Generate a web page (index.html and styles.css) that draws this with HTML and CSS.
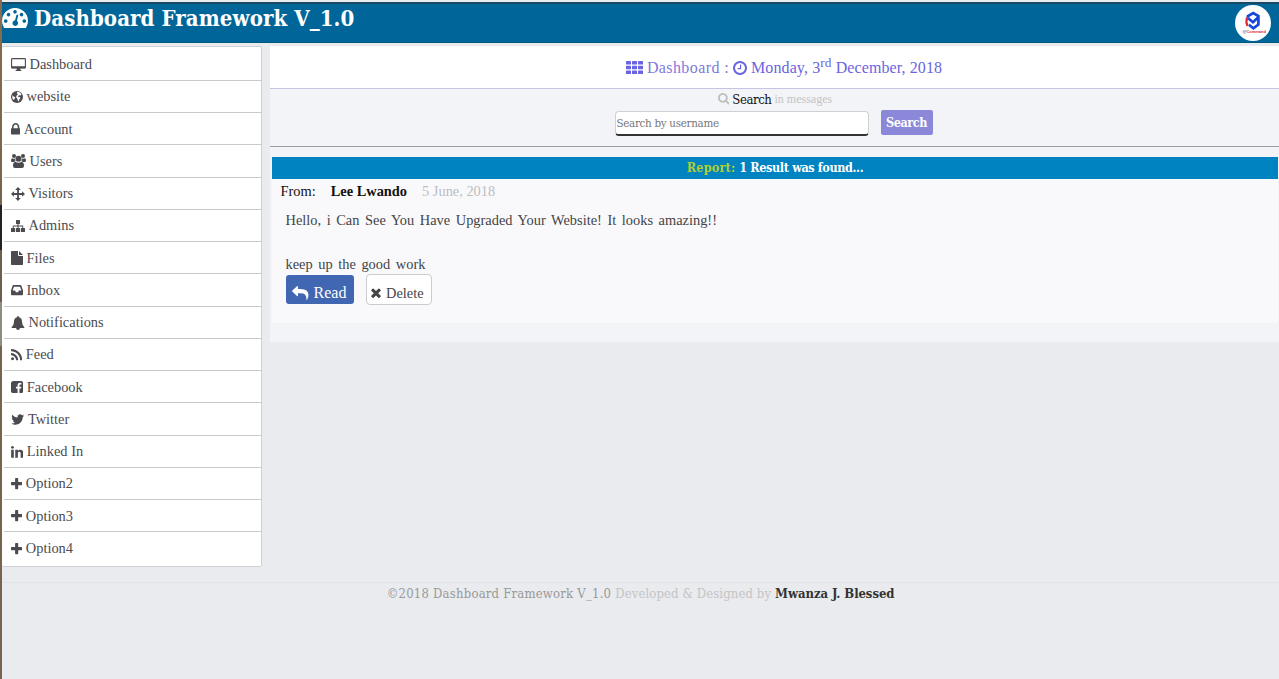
FILE: index.html
```html
<!DOCTYPE html>
<html lang="en">
<head>
<meta charset="utf-8">
<title>Dashboard Framework V_1.0</title>
<link rel="stylesheet" href="styles.css">
</head>
<body>
<header class="topbar">
  <h1 class="brand">
    <svg class="brand-icon" width="26" height="20" viewBox="0 0 26 20"><path fill="#fff" fill-rule="evenodd" d="M13 0A13 13 0 0 1 26 13Q26 16.600 24.100 19.400Q23.800 20 23 20H3Q2.200 20 1.900 19.400Q0 16.600 0 13A13 13 0 0 1 13 0ZM3.700 11.200a1.800 1.800 0 1 0 .01 0ZM6.500 4.800a1.800 1.800 0 1 0 .01 0ZM13 2a1.800 1.800 0 1 0 .01 0ZM19.500 4.800a1.800 1.800 0 1 0 .01 0ZM22.300 11.200a1.800 1.800 0 1 0 .01 0ZM14.500 7L13 12.300a2.800 2.800 0 1 0 1.900.5L16.300 7.400Q16 5.900 14.500 7Z"/></svg>
    <span>Dashboard Framework V_1.0</span>
  </h1>
  <span class="avatar">
    <svg width="36" height="36" viewBox="0 0 36 36"><path d="M12.200 12.500q-1.700 4 .3 8.500" fill="none" stroke="#e22832" stroke-width="2.200"/><path d="M13 12.800v-1.800l5.200-3 5.200 3v8.500l-5 3.800-4.500-3.500M13.300 13.200l4.700 4 5-4.700" fill="none" stroke="#1746dc" stroke-width="2.700"/><text class="avatar-label" x="7.500" y="27.500"><tspan fill="#1746dc">@</tspan>Command</text></svg>
  </span>
</header>

<div class="layout">
  <nav class="sidebar">
    <a class="item"><svg width="15" height="13" viewBox="0 0 15 13"><path fill="none" stroke="currentColor" stroke-width="1.100" d="M1.300.6h12.400q.7 0 .7.700v8q0 .7-.7.700H1.300q-.7 0-.7-.7v-8q0-.7.7-.7z"/><path fill="currentColor" d="M.6 8.300h13.800v1.900H.6zM6 10h3l.5 2 1 .4V13h-6v-.6l1-.4z"/></svg>Dashboard</a>
    <a class="item"><svg width="12" height="12" viewBox="0 0 12 12"><circle cx="6" cy="6" r="6" fill="currentColor"/><path fill="#fff" d="M6.200.8L8.900 1.500 10.500 3.300 9.500 4.500 8.300 4.200 7 5.100 7.600 6.200 9 6 9.400 7.300 8.300 8.400 7.800 10.200 6.900 9.900 6.500 7.900 5.200 6.500 5.500 4.700 7 3.200 5.800 2.300zM1.300 4.300l1.400 1.200 1.500.8-.3 1.300-1 1.100L1.500 8z"/></svg>website</a>
    <a class="item"><svg width="9.300" height="11.500" viewBox="320 128 1152 1408"><path fill="currentColor" d="M640 768h512v-192q0-106-75-181t-181-75-181 75-75 181v192zm832 96v576q0 40-28 68t-68 28h-960q-40 0-68-28t-28-68v-576q0-40 28-68t68-28h32v-192q0-184 132-316t316-132 316 132 132 316v192h32q40 0 68 28t28 68z"/></svg>Account</a>
    <a class="item"><svg width="15" height="14" viewBox="0 0 15 14"><g fill="currentColor"><circle cx="3" cy="2" r="2"/><circle cx="12" cy="2" r="2"/><circle cx="7.500" cy="4.700" r="3"/><path d="M0 6.700Q0 4 1.300 4.200q1.500.9 2.700.3Q3.800 6 4.700 7.200q-1.100 0-1.800.9H1.300Q0 8.100 0 6.700zM15 6.700Q15 4 13.700 4.200q-1.500.9-2.700.3 .2 1.500-.7 2.700 1.100 0 1.800.9h1.600q1.300 0 1.300-1.400zM4.300 7.700q3.200 2 6.400 0 2.300.4 2.300 4.300 0 2-2 2H4q-2 0-2-2 0-3.900 2.300-4.300z"/></g></svg>Users</a>
    <a class="item"><svg width="14" height="14" viewBox="0 0 14 14"><path fill="currentColor" d="M7 0l2.800 2.900H7.900v3.200h3.200V4.200L14 7l-2.900 2.800V7.900H7.900v3.200h1.900L7 14l-2.800-2.900h1.900V7.900H2.900v1.900L0 7l2.900-2.800v1.900h3.200V2.900H4.200z"/></svg>Visitors</a>
    <a class="item"><svg width="14" height="12" viewBox="0 0 14 12"><path fill="currentColor" d="M5.500 0h3q.5 0 .5.500v3q0 .5-.5.500h-1v1.500h4.700v2.500h1.300q.5 0 .5.500v3q0 .5-.5.500h-3.100q-.5 0-.5-.5v-3q0-.5.5-.5h.9V6.400H7.500V8h1.100q.5 0 .5.500v3q0 .5-.5.500H5.400q-.5 0-.5-.5v-3q0-.5.5-.5h1.100V6.400H2.700V8h.9q.5 0 .5.500v3q0 .5-.5.500H.5q-.5 0-.5-.5v-3Q0 8 .5 8h1.300V5.500h4.700V4h-1Q5 4 5 3.500v-3Q5 0 5.500 0z"/></svg>Admins</a>
    <a class="item"><svg width="12" height="14" viewBox="0 0 12 14"><path fill="currentColor" d="M.7 0H7v4.300q0 .7.700.7H12v8.300q0 .7-.7.700H.7q-.7 0-.7-.7V.7Q0 0 .7 0zM8 0l4 4H8z"/></svg>Files</a>
    <a class="item"><svg width="12" height="10.300" viewBox="0 0 12 10.300"><path fill="currentColor" fill-rule="evenodd" d="M2.700 0h6.600q.7 0 1 .6L12 5.500v4q0 .8-.8.800H.8q-.8 0-.8-.8v-4L1.700.6Q2 0 2.700 0zM3 1.700L1.600 5.500h2.500l.8 1.700h2.200l.8-1.700h2.500L9 1.700z"/></svg>Inbox</a>
    <a class="item"><svg width="14" height="14" viewBox="0 0 14 14"><path fill="currentColor" d="M7 0q1 0 .9 1.200Q11 2 11 5.500q0 4 2.500 5.800 0 .8-.9.800H9Q8.800 14 7 14t-2-1.900H1.400q-.9 0-.9-.8Q3 9.500 3 5.500 3 2 6.100 1.200 6 0 7 0z"/></svg>Notifications</a>
    <a class="item"><svg width="11.300" height="11.300" viewBox="192 128 1408 1408"><path fill="currentColor" d="M576 1344q0 80-56 136t-136 56-136-56-56-136 56-136 136-56 136 56 56 136zm512 123q2 28-17 48-18 21-47 21h-135q-25 0-43-16.500t-20-41.500q-22-229-184.500-391.500t-391.500-184.500q-25-2-41.500-20t-16.500-43v-135q0-29 21-47 17-17 43-17h5q160 13 306 80.500t259 181.500q114 113 181.500 259t80.500 306zm512 2q2 27-18 47-18 20-46 20h-143q-26 0-44.500-17.500t-19.500-42.500q-12-215-101-408.500t-231.500-336-336-231.500-408.500-102q-25-1-42.500-19.500t-17.500-43.500v-143q0-28 20-46 18-18 44-18h3q262 13 501.500 120t425.500 294q187 186 294 425.500t120 501.500z"/></svg>Feed</a>
    <a class="item"><svg width="12.300" height="12.300" viewBox="128 128 1536 1536"><path fill="currentColor" d="M1376 128q119 0 203.500 84.500t84.500 203.500v960q0 119-84.500 203.500t-203.500 84.500h-188v-595h199l30-232h-229v-148q0-56 23.500-84t91.500-28l122-1v-207q-63-9-178-9-136 0-217.500 80t-81.500 226v171h-200v232h200v595h-532q-119 0-203.500-84.500t-84.500-203.500v-960q0-119 84.500-203.500t203.500-84.500h960z"/></svg>Facebook</a>
    <a class="item"><svg width="13.400" height="11" viewBox="64 256 1664 1280"><path fill="currentColor" d="M1684 408q-67 98-162 167 1 14 1 42 0 130-38 259.500t-115.500 248.500-184.500 210.500-258 146-323 54.500q-271 0-496-145 35 4 78 4 225 0 401-138-105-2-188-64.500t-114-159.500q33 5 61 5 43 0 85-11-112-23-185.500-111.500t-73.500-205.500v-4q68 38 146 41-66-44-105-115t-39-154q0-88 44-163 121 149 294.500 238.500t371.500 99.500q-8-38-8-74 0-134 94.500-228.500t228.500-94.500q140 0 236 102 109-21 205-78-37 115-142 178 93-10 186-50z"/></svg>Twitter</a>
    <a class="item"><svg width="12.300" height="11.800" viewBox="128 148 1536 1468"><path fill="currentColor" d="M477 625v991h-330v-991h330zm21-306q1 73-50.500 122t-135.500 49h-2q-82 0-132-49t-50-122q0-74 51.500-122.500t134.500-48.500 133 48.500 51 122.500zm1166 729v568h-329v-530q0-105-40.500-164.500t-126.500-59.500q-63 0-105.500 34.500t-63.500 85.500q-11 30-11 81v553h-329q2-399 2-647t-1-296l-1-48h329v144h-2q20-32 41-56t56.500-52 87-43.500 114.500-15.500q171 0 275 113.500t104 332.500z"/></svg>Linked In</a>
    <a class="item"><svg class="plus" width="11.300" height="11.300" viewBox="0 0 11 11"><path fill="currentColor" d="M4.700 0h1.600q.7 0 .7.700V4h3.300q.7 0 .7.700v1.600q0 .7-.7.700H7v3.300q0 .7-.7.700H4.700q-.7 0-.7-.7V7H.7Q0 7 0 6.300V4.700Q0 4 .7 4H4V.7Q4 0 4.700 0z"/></svg>Option2</a>
    <a class="item"><svg class="plus" width="11.300" height="11.300" viewBox="0 0 11 11"><path fill="currentColor" d="M4.700 0h1.600q.7 0 .7.700V4h3.300q.7 0 .7.700v1.600q0 .7-.7.700H7v3.300q0 .7-.7.700H4.700q-.7 0-.7-.7V7H.7Q0 7 0 6.300V4.700Q0 4 .7 4H4V.7Q4 0 4.700 0z"/></svg>Option3</a>
    <a class="item"><svg class="plus" width="11.300" height="11.300" viewBox="0 0 11 11"><path fill="currentColor" d="M4.700 0h1.600q.7 0 .7.700V4h3.300q.7 0 .7.700v1.600q0 .7-.7.700H7v3.300q0 .7-.7.700H4.700q-.7 0-.7-.7V7H.7Q0 7 0 6.300V4.700Q0 4 .7 4H4V.7Q4 0 4.700 0z"/></svg>Option4</a>
  </nav>

  <main class="main">
    <div class="datebar">
      <svg width="17" height="13" viewBox="0 0 17 13"><path fill="currentColor" d="M0 .5Q0 0 .5 0h4q.5 0 .5.500V3q0 .5-.5.500h-4Q0 3.500 0 3zM6 .5q0-.5.500-.5h4q.5 0 .5.500V3q0 .5-.5.500h-4Q6 3.500 6 3zM12 .5q0-.5.500-.5h4q.5 0 .5.500V3q0 .5-.5.500h-4q-.5 0-.5-.5zM0 5.200q0-.5.500-.5h4q.5 0 .5.500v2.500q0 .5-.5.500h-4Q0 8.200 0 7.700zM6 5.200q0-.5.500-.5h4q.5 0 .5.500v2.500q0 .5-.5.500h-4Q6 8.200 6 7.700zM12 5.200q0-.5.500-.5h4q.5 0 .5.500v2.500q0 .5-.5.500h-4q-.5 0-.5-.5zM0 10q0-.5.500-.5h4Q5 9.500 5 10v2.500q0 .5-.5.500h-4q-.5 0-.5-.5zM6 10q0-.5.500-.5h4q.5 0 .5.500v2.500q0 .5-.5.500h-4q-.5 0-.5-.5zM12 10q0-.5.500-.5h4q.5 0 .5.500v2.500q0 .5-.5.500h-4q-.5 0-.5-.5z"/></svg>
      <span class="crumb">Dashboard :</span>
      <svg width="14" height="14" viewBox="128 128 1536 1536"><path fill="currentColor" d="M1024 544v448q0 14-9 23t-23 9h-320q-14 0-23-9t-9-23v-64q0-14 9-23t23-9h224v-352q0-14 9-23t23-9h64q14 0 23 9t9 23zm416 352q0-148-73-273t-198-198-273-73-273 73-198 198-73 273 73 273 198 198 273 73 273-73 198-198 73-273zm224 0q0 209-103 385.500t-279.500 279.500-385.500 103-385.500-103-279.500-279.500-103-385.500 103-385.500 279.500-279.500 385.500-103 385.500 103 279.500 279.500 103 385.500z"/></svg>
      <span class="date">Monday, 3<sup>rd</sup> December, 2018</span>
    </div>

    <section class="search">
      <div class="search-title">
        <svg width="11.500" height="11.500" viewBox="64 128 1664 1664"><path fill="#bdbdbd" d="M1216 832q0-185-131.500-316.500t-316.500-131.500-316.500 131.500-131.500 316.500 131.500 316.500 316.500 131.500 316.500-131.500 131.500-316.500zm512 832q0 52-38 90t-90 38q-54 0-90-38l-343-342q-179 124-399 124-143 0-273.500-55.500t-225-150-150-225-55.500-273.500 55.500-273.500 150-225 225-150 273.500-55.500 273.500 55.500 225 150 150 225 55.500 273.500q0 220-124 399l343 343q37 37 37 90z"/></svg>
        <span class="search-word">Search</span>
        <span class="search-scope">in messages</span>
      </div>
      <div class="search-form">
        <input class="search-input" type="text" placeholder="Search by username">
        <button class="search-btn">Search</button>
      </div>
    </section>

    <section class="results">
      <div class="report"><span class="report-label">Report:</span><span class="report-text">1 Result was found...</span></div>
      <article class="message">
        <div class="meta"><span class="from">From:</span><b class="sender">Lee Lwando</b><span class="sent">5 June, 2018</span></div>
        <p class="text">Hello, i Can See You Have Upgraded Your Website! It looks amazing!!<br><br>keep up the good work</p>
        <div class="actions">
          <a class="btn read"><svg width="16.500" height="14" viewBox="0 0 16.500 14"><path fill="currentColor" d="M.3 4.500L5 .2Q6 -.3 6 .8V3h2.500q8 0 8 6.200 0 2-1.400 4.600-.6.500-.7-.3Q14.800 7.300 8.500 7.300H6v2.300q0 1.100-1 .5L.3 5.600Q-.2 5 .3 4.500z"/></svg><span>Read</span></a>
          <a class="btn delete"><svg width="10" height="10" viewBox="302 302 1188 1252"><path fill="currentColor" d="M1490 1322q0 40-28 68l-136 136q-28 28-68 28t-68-28l-294-294-294 294q-28 28-68 28t-68-28l-136-136q-28-28-28-68t28-68l294-294-294-294q-28-28-28-68t28-68l136-136q28-28 68-28t68 28l294 294 294-294q28-28 68-28t68 28l136 136q28 28 28 68t-28 68l-294 294 294 294q28 28 28 68z"/></svg><span>Delete</span></a>
        </div>
      </article>
    </section>
  </main>
</div>

<footer class="footer"><span class="copy">©2018 Dashboard Framework V_1.0</span><span class="credit">Developed &amp; Designed by</span><b class="author">Mwanza J. Blessed</b></footer>
</body>
</html>
```

FILE: styles.css
```css
* { box-sizing: border-box; }
body {
  margin: 0;
  height: 679px;
  overflow: hidden;
  padding: 2px 0 0 2px;
  background:
    linear-gradient(#8a6d4c 0, #75654f 205px, #222 205px, #222 250px, #6d5f50 250px, #6d5f50 302px, #8f8d80 302px, #8f8d80 346px, #75654f 346px) 0 0 / 2px 679px no-repeat,
    #e9ebee;
  font-family: "Liberation Serif", serif;
  font-size: 14.4px;
  color: #444;
}
svg { display: block; flex: none; }

.topbar {
  display: flex;
  justify-content: space-between;
  height: 41px;
  padding-right: 8px;
  background: #006699;
  border-top: 2px solid #184a63;
  border-bottom: 1px solid #00587f;
}
.brand {
  display: flex;
  gap: 6px;
  margin: 0;
  padding-top: 4px;
  height: 28px;
  color: #fff;
  font: bold 22px/20px "DejaVu Serif Condensed", "DejaVu Serif", serif;
  font-stretch: condensed;
  letter-spacing: 0.1px;
  white-space: nowrap;
}
.avatar {
  width: 36px;
  height: 36px;
  margin-top: 1px;
  border-radius: 50%;
  background: #fff;
}
.avatar-label { font: bold 4px "Liberation Sans", sans-serif; fill: #e22832; }

.layout {
  display: flex;
  align-items: flex-start;
  gap: 8px;
  padding-top: 3px;
}
.sidebar {
  width: 260px;
  height: 521px;
  padding: 1.5px 0 0 2px;
  background: #fff;
  border: 1px solid #cfd0d4;
  border-left: 0;
  border-radius: 2px;
}
.item {
  display: flex;
  align-items: center;
  gap: 3.5px;
  height: 32.25px;
  padding: 1px 0 0 7px;
  border-bottom: 1px solid #c6cac9;
  color: #4b4b4f;
}
.item:last-child { border-bottom: 0; }

.main { flex: 1; height: 296px; background: #f3f4f7; }
.datebar {
  display: flex;
  align-items: center;
  justify-content: center;
  gap: 4px;
  height: 43px;
  padding: 1px 0 0 19px;
  background: #fff;
  border-bottom: 1px solid #c5c5e3;
  color: #6a64e0;
  font-size: 16px;
  white-space: nowrap;
}
.datebar sup { font-size: 13.3px; line-height: 0; vertical-align: 6px; }
.crumb { color: #7f79dc; letter-spacing: 0.4px; }
.date { letter-spacing: 0.1px; }

.search { height: 58px; border-bottom: 1px solid #9b9d9e; }
.search-title {
  display: flex;
  align-items: center;
  justify-content: center;
  gap: 3px;
  height: 20px;
  padding-left: 1px;
  font-family: "DejaVu Serif Condensed", "DejaVu Serif", serif;
  font-stretch: condensed;
}
.search-word { font-size: 13px; letter-spacing: -0.4px; color: #111; }
.search-scope { font: 12px "Liberation Serif", serif; color: #c4c4c4; }
.search-form { display: flex; justify-content: center; align-items: center; gap: 12px; padding-right: 2px; }
.search-input {
  width: 254px;
  height: 25px;
  margin: 2px 0 0;
  padding: 0 2px 0 1px;
  border: 1px solid #d0d0d0;
  border-bottom: 2px solid #333;
  border-radius: 4px;
  background: #fff;
  font: 11.5px "DejaVu Serif Condensed", "DejaVu Serif", serif;
  font-stretch: condensed;
  letter-spacing: -0.3px;
}
.search-input::placeholder { color: #777; opacity: 1; }
.search-btn {
  width: 52px;
  height: 25px;
  padding: 0;
  border: 0;
  border-radius: 2px;
  background: #8c88d9;
  color: #fff;
  font: bold 12.5px "DejaVu Serif Condensed", "DejaVu Serif", serif;
  font-stretch: condensed;
  letter-spacing: -0.4px;
}

.results { padding: 10px 1px 0 2px; }
.report {
  display: flex;
  justify-content: center;
  gap: 4px;
  height: 22px;
  background: #0083c1;
  color: #fff;
  font: bold 12.5px/22px "DejaVu Serif Condensed", "DejaVu Serif", serif;
  font-stretch: condensed;
  letter-spacing: -0.37px;
}
.report-label { color: #b2cf32; letter-spacing: 0.2px; }
.message { height: 144px; padding: 3px 0 0 8.5px; background: #f9f9fc; }
.meta { display: flex; gap: 15px; height: 18px; line-height: 18px; color: #111; }
.sent { color: #bcbdc1; }
.text {
  margin: 9px 0 0 5px;
  line-height: 22px;
  word-spacing: 2px;
  color: #444;
}
.actions { display: flex; gap: 12px; margin-left: 5.5px; }
.btn { display: flex; align-items: center; border-radius: 3px; }
.read {
  width: 68px;
  height: 29px;
  gap: 5px;
  padding: 6px 0 0 6px;
  background: #4267b2;
  color: #fff;
  font-size: 16px;
}
.delete {
  width: 66px;
  height: 31px;
  margin-top: -1px;
  gap: 5px;
  padding: 7px 0 0 4px;
  border: 1px solid #ccc;
  border-radius: 4px;
  background: #fff;
}

.footer {
  display: flex;
  justify-content: center;
  gap: 4px;
  margin-top: 15px;
  padding-top: 1px;
  border-top: 1px solid #e2e3e6;
  font: 13px/20px "DejaVu Serif Condensed", "DejaVu Serif", serif;
  font-stretch: condensed;
  letter-spacing: 0.2px;
  color: #999;
}
.credit { color: #c4c4c6; letter-spacing: 0.1px; }
.author { color: #333; letter-spacing: -0.08px; }
```
